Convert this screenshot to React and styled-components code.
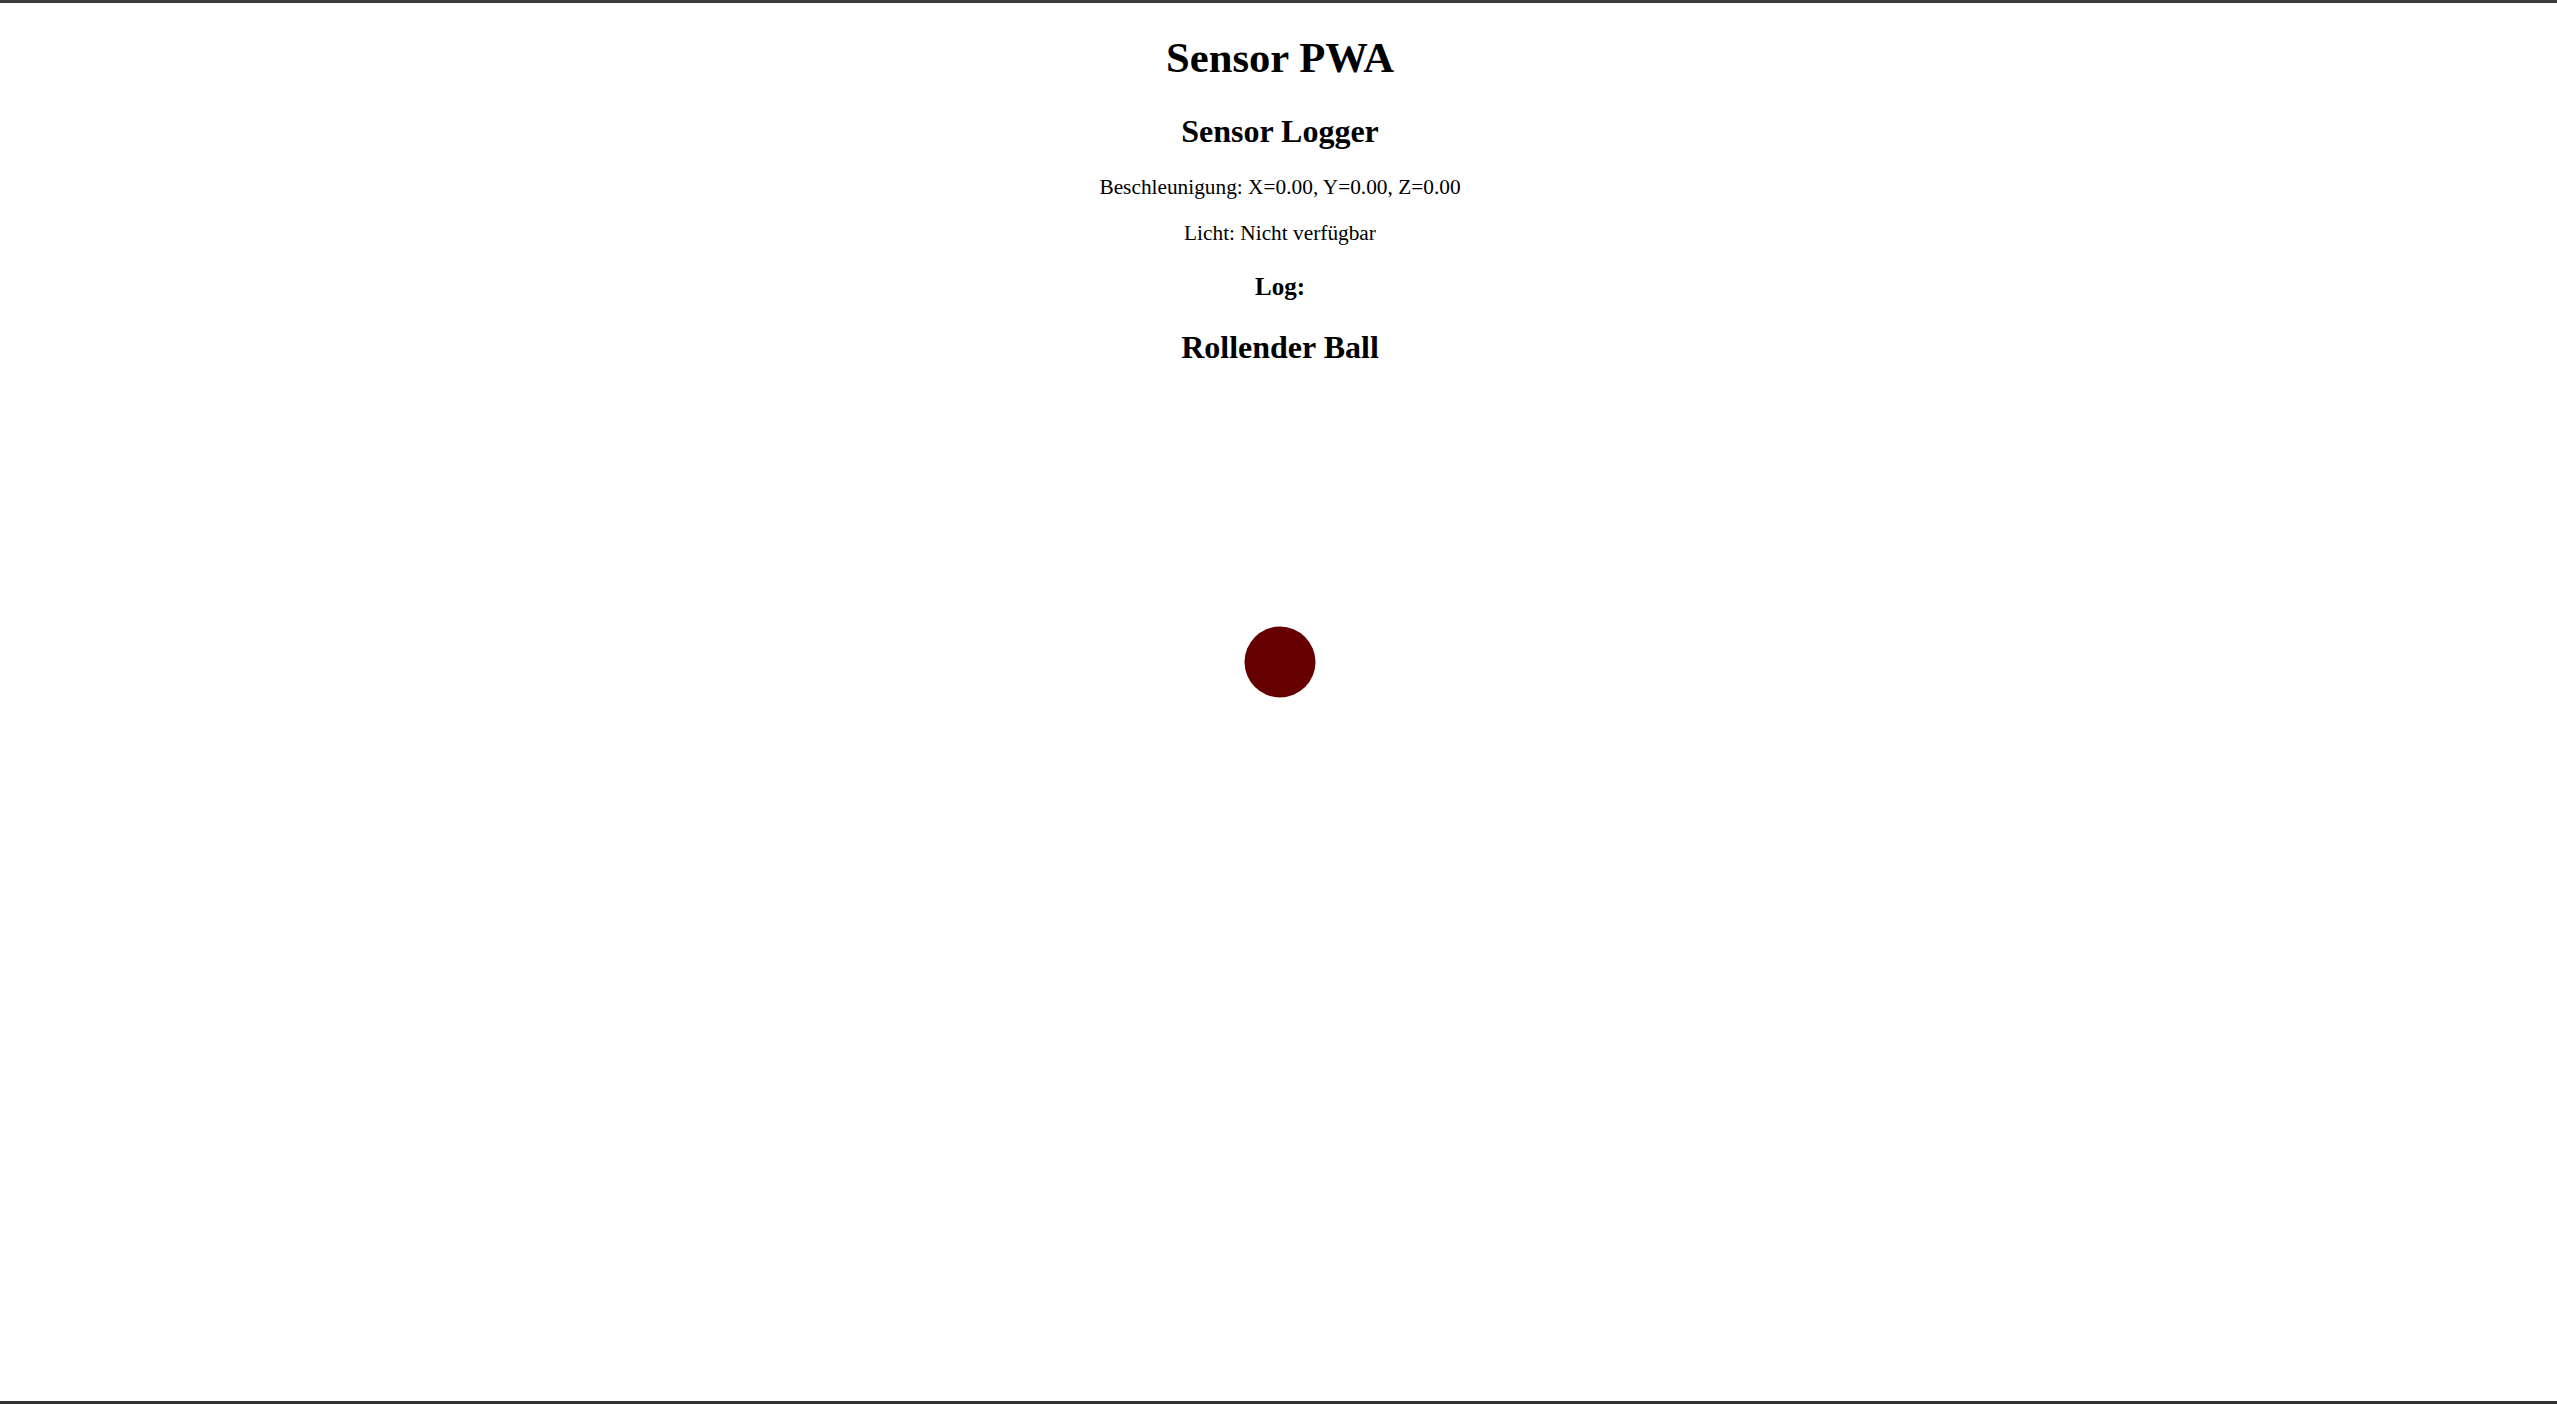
import React from 'react';
import styled, { createGlobalStyle } from 'styled-components';

const GlobalStyle = createGlobalStyle`
  html, body {
    margin: 0;
    padding: 0;
    background: #ffffff;
  }

  body {
    font-family: 'Liberation Serif', 'Times New Roman', serif;
    color: #000000;
  }
`;

const Frame = styled.div`
  box-sizing: border-box;
  min-height: 100vh;
  border-top: 3px solid #3b3b3b;
  border-bottom: 3px solid #333333;
  padding: 1px 8px 1px 11px;
  text-align: center;
`;

const Title = styled.h1`
  font-size: 42.67px;
  font-weight: bold;
  margin: 28.5px 0 31.5px;
`;

const Heading = styled.h2`
  font-size: 32px;
  font-weight: bold;
  margin: ${(p) => p.$top || '28px'} 0 ${(p) => p.$bottom || '26.5px'};
`;

const SubHeading = styled.h3`
  font-size: 24.96px;
  font-weight: bold;
  margin: 27px 0 24.96px;
`;

const Reading = styled.p`
  font-size: 21.33px;
  margin: 21.33px 0;
`;

const Arena = styled.div`
  position: relative;
  height: 539px;
`;

const Ball = styled.div`
  position: absolute;
  left: 50%;
  top: 50%;
  width: 71px;
  height: 71px;
  border-radius: 50%;
  background: #660000;
  transform: translate(-50%, -50%);
`;

function App() {
  const accel = { x: 0, y: 0, z: 0 };
  const light = null;

  return (
    <>
      <GlobalStyle />
      <Frame>
        <Title>Sensor PWA</Title>

        <Heading $top='0' $bottom='24.5px'>
          Sensor Logger
        </Heading>
        <Reading>
          Beschleunigung: X={accel.x.toFixed(2)}, Y={accel.y.toFixed(2)}, Z=
          {accel.z.toFixed(2)}
        </Reading>
        <Reading>Licht: {light === null ? 'Nicht verfügbar' : light}</Reading>
        <SubHeading>Log:</SubHeading>

        <Heading>Rollender Ball</Heading>
        <Arena>
          <Ball />
        </Arena>
      </Frame>
    </>
  );
}

export default App;
